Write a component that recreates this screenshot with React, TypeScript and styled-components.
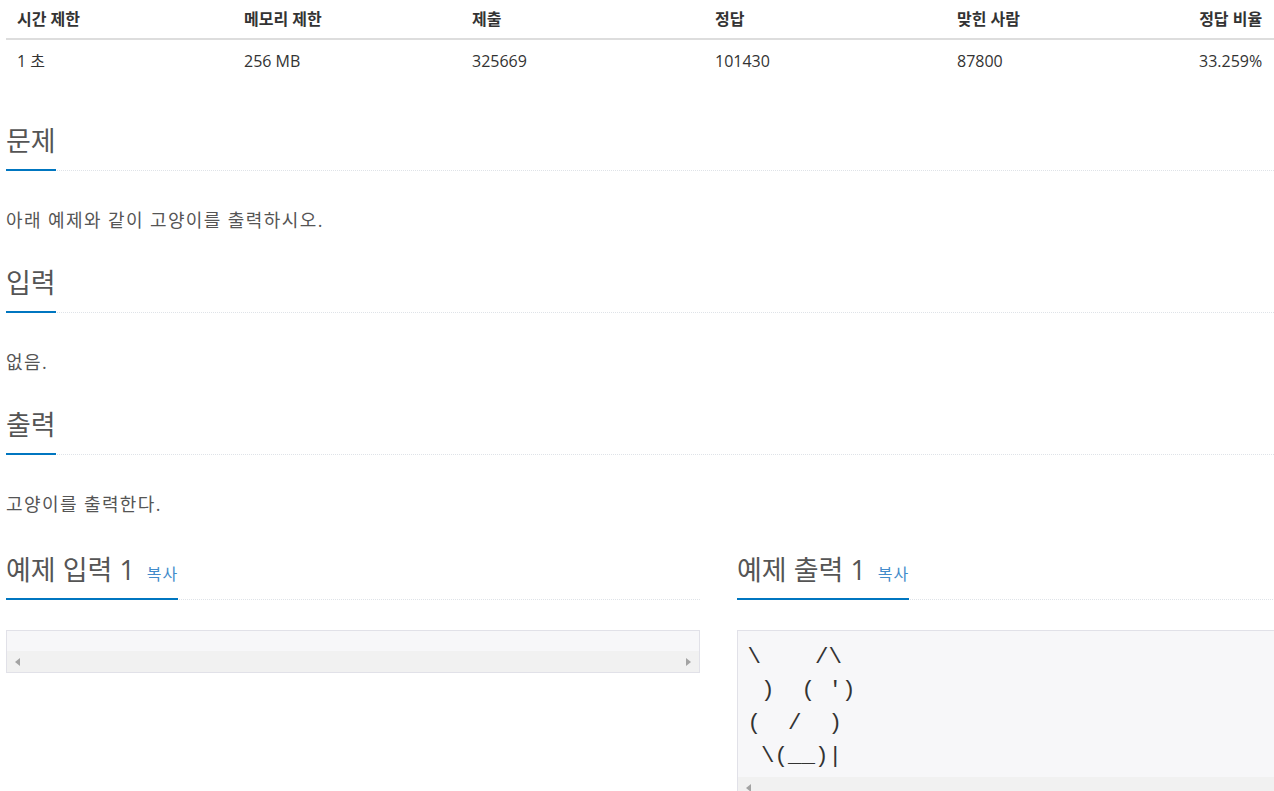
import React from "react"
import styled, { createGlobalStyle } from "styled-components"

const GlobalStyle = createGlobalStyle`
  html, body {
    margin: 0;
    padding: 0;
    background: #fff;
    overflow: hidden;
  }
  body {
    font-family: "Open Sans", "Noto Sans CJK KR", sans-serif;
    color: #333;
  }
`

const columns = ["시간 제한", "메모리 제한", "제출", "정답", "맞힌 사람", "정답 비율"]
const values = ["1 초", "256 MB", "325669", "101430", "87800", "33.259%"]

const catArt = ["\\    /\\", " )  ( ')", "(  /  )", " \\(__)|"].join("\n")

const App: React.FC = () => {
  return (
    <Page>
      <GlobalStyle />
      <InfoTable>
        {columns.map((c, i) => (
          <HeadCell key={c} $right={i === columns.length - 1}>
            {c}
          </HeadCell>
        ))}
        {values.map((v, i) => (
          <BodyCell key={v} $right={i === values.length - 1}>
            {v}
          </BodyCell>
        ))}
      </InfoTable>

      <Section>
        <Headline>
          <Title>문제</Title>
        </Headline>
        <Text>아래 예제와 같이 고양이를 출력하시오.</Text>
      </Section>

      <Section>
        <Headline>
          <Title>입력</Title>
        </Headline>
        <Text>없음.</Text>
      </Section>

      <Section>
        <Headline>
          <Title>출력</Title>
        </Headline>
        <Text>고양이를 출력한다.</Text>
      </Section>

      <SampleRow>
        <SampleCol>
          <Headline>
            <Title>
              예제 입력 1<CopyLink>복사</CopyLink>
            </Title>
          </Headline>
          <SampleBox>
            <SamplePre $empty></SamplePre>
            <ScrollTrack>
              <Arrow $dir="left" />
              <Arrow $dir="right" />
            </ScrollTrack>
          </SampleBox>
        </SampleCol>
        <SampleCol>
          <Headline>
            <Title>
              예제 출력 1<CopyLink>복사</CopyLink>
            </Title>
          </Headline>
          <SampleBox>
            <SamplePre>{catArt}</SamplePre>
            <ScrollTrack>
              <Arrow $dir="left" />
              <Arrow $dir="right" />
            </ScrollTrack>
          </SampleBox>
        </SampleCol>
      </SampleRow>
    </Page>
  )
}

const Page = styled.div`
  width: 1268px;
  padding-left: 6px;
`

const InfoTable = styled.div`
  display: grid;
  grid-template-columns: 227px 228px 243px 242px 242px 1fr;
`

const HeadCell = styled.div<{ $right?: boolean }>`
  height: 40px;
  line-height: 22px;
  padding: 8px 12px 8px 11px;
  box-sizing: border-box;
  border-bottom: 2px solid #ddd;
  font-size: 16px;
  font-weight: 700;
  color: #333;
  white-space: nowrap;
  text-align: ${(p) => (p.$right ? "right" : "left")};
`

const BodyCell = styled.div<{ $right?: boolean }>`
  padding: 10px 12px 10px 11px;
  line-height: 22px;
  font-size: 16px;
  color: #333;
  white-space: nowrap;
  text-align: ${(p) => (p.$right ? "right" : "left")};
`

const Section = styled.section`
  margin-top: 44px;

  & + & {
    margin-top: 33px;
  }
`

const Headline = styled.div`
  display: flex;
  align-items: flex-end;
  border-bottom: 1px dotted #dfe3e8;
`

const Title = styled.h2`
  margin: 0 0 -1px;
  padding-bottom: 13px;
  border-bottom: 2px solid #0076c0;
  font-size: 27px;
  font-weight: 400;
  line-height: 30px;
  color: #555;
  white-space: nowrap;
`

const CopyLink = styled.span`
  margin-left: 12px;
  font-size: 16px;
  line-height: 1;
  letter-spacing: 1px;
  color: #428bca;
  cursor: pointer;
`

const Text = styled.p`
  margin: 34px 0 0;
  font-size: 18px;
  letter-spacing: 1.4px;
  line-height: 30px;
  color: #555;
`

const SampleRow = styled.div`
  display: grid;
  grid-template-columns: 694px 694px;
  column-gap: 37px;
  margin-top: 36px;
`

const SampleCol = styled.div`
  min-width: 0;
`

const SampleBox = styled.div`
  margin-top: 30px;
  border: 1px solid #e1e1e8;
  background: #f7f7f9;
`

const SamplePre = styled.pre<{ $empty?: boolean }>`
  margin: 0;
  padding: ${(p) => (p.$empty ? "10px 9.5px" : "10px 9.5px 4px")};
  font-family: "Liberation Mono", "DejaVu Sans Mono", monospace;
  font-size: 22.5px;
  line-height: 33px;
  color: #333;
  white-space: pre;
`

const ScrollTrack = styled.div`
  height: 21px;
  padding: 0 8px;
  background: #f1f1f1;
  display: flex;
  align-items: center;
  justify-content: space-between;
`

const Arrow = styled.span<{ $dir: "left" | "right" }>`
  width: 0;
  height: 0;
  border-top: 4.5px solid transparent;
  border-bottom: 4.5px solid transparent;
  ${(p) =>
    p.$dir === "left"
      ? "border-right: 5px solid #a3a3a3;"
      : "border-left: 5px solid #a3a3a3;"}
`

export default App
